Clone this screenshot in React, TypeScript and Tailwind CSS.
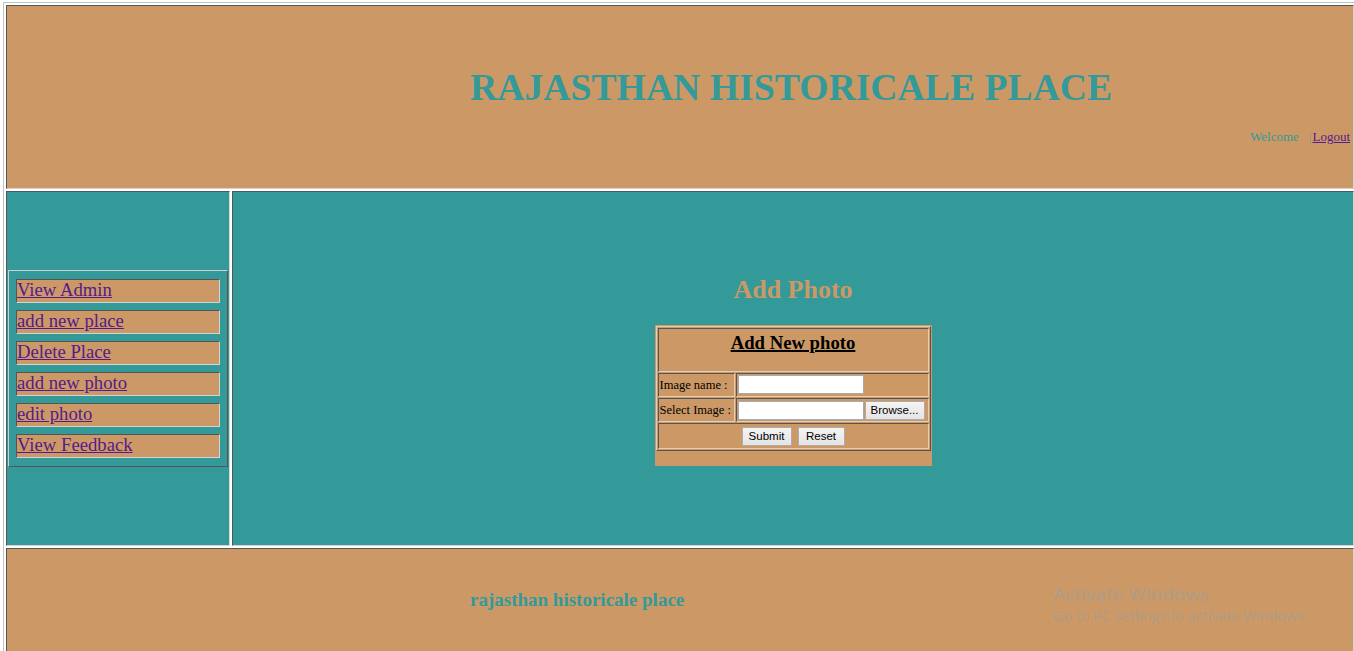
const inset = "border border-t-[#555555] border-l-[#555555] border-b-[#d4d4d4] border-r-[#d4d4d4]";
const formInset = "border border-t-[#555555] border-l-[#555555] border-b-[#e2cfba] border-r-[#e2cfba]";

const links = ["View Admin", "add new place", "Delete Place", "add new photo", "edit photo", "View Feedback"];

function Header() {
  return (
    <div className={`h-[184px] bg-[#cc9966] ${inset} flex flex-col`}>
      <h1 className="mt-[62px] pl-[463px] text-[37.7px] leading-[38px] font-bold text-[#339999] whitespace-nowrap">
        RAJASTHAN HISTORICALE PLACE
      </h1>
      <div className="mt-[24px] flex justify-end pr-[3px] text-[13px] leading-[13px]">
        <span className="text-[#339999] mr-[10px]">Welcome</span>
        <span className="text-[#8f8f8f] mr-[1px]">|</span>
        <a href="#" className="text-[#551a8b] underline">Logout</a>
      </div>
    </div>
  );
}

function SideMenu() {
  return (
    <div className={`w-[224px] bg-[#339999] ${inset} flex items-center px-[1px]`}>
      <div className="w-[220px] border border-t-[#cfcfcf] border-l-[#cfcfcf] border-b-[#555555] border-r-[#555555] px-[7px] py-[8px] flex flex-col gap-[7px]">
        {links.map((l) => (
          <div key={l} className={`h-[24px] bg-[#cc9966] ${inset}`}>
            <a href="#" className="block text-[18.7px] leading-[20px] text-[#551a8b] underline whitespace-nowrap">
              {l}
            </a>
          </div>
        ))}
      </div>
    </div>
  );
}

function Btn({ label, w }: { label: string; w: string }) {
  return (
    <button
      className={`${w} h-[19px] border border-[#acacac] bg-gradient-to-b from-[#f4f4f4] to-[#e4e4e4] font-['Liberation_Sans',sans-serif] text-[11.5px] leading-[17px] text-black`}
    >
      {label}
    </button>
  );
}

function PhotoForm() {
  return (
    <div className="w-[277px] bg-[#cc9966] pt-[1px] px-[1px] pb-[15px]">
      <div className="w-[275px] border border-t-[#e2cfba] border-l-[#e2cfba] border-b-[#555555] border-r-[#555555] p-[1px] flex flex-col gap-[1px]">
        <div className={`h-[44px] ${formInset} pt-[4px] text-center`}>
          <h3 className="text-[18.72px] leading-[19px] font-bold text-black underline decoration-2">Add New photo</h3>
        </div>
        <div className="flex gap-[1px] h-[24px]">
          <div className={`w-[77px] ${formInset} flex items-center pl-[1px] text-[12.5px] leading-[13px] whitespace-nowrap`}>
            Image name :
          </div>
          <div className={`flex-1 ${formInset} flex items-start pt-[1px] pl-[1px]`}>
            <input className="w-[126px] h-[19px] border border-[#a9a9a9] bg-white" />
          </div>
        </div>
        <div className="flex gap-[1px] h-[24px]">
          <div className={`w-[77px] ${formInset} flex items-center pl-[1px] text-[12.5px] leading-[13px] whitespace-nowrap`}>
            Select Image :
          </div>
          <div className={`flex-1 ${formInset} flex items-center gap-[1px] pl-[1px]`}>
            <input className="w-[126px] h-[19px] border border-[#a9a9a9] bg-white" />
            <Btn label="Browse..." w="w-[60px]" />
          </div>
        </div>
        <div className={`h-[26px] ${formInset} flex items-center justify-center gap-[6px]`}>
          <Btn label="Submit" w="w-[50px]" />
          <Btn label="Reset" w="w-[47px]" />
        </div>
      </div>
    </div>
  );
}

export default function App() {
  return (
    <div className="relative w-full h-[651px] overflow-hidden bg-white font-['Liberation_Serif',serif] text-black">
      <div className="ml-[3px] mt-[2px] w-[1354px] border border-t-[#c0c0c0] border-l-[#c0c0c0] border-b-[#555555] border-r-[#555555] p-[2px] flex flex-col gap-[2px]">
        <Header />
        <div className="flex gap-[2px] h-[355px]">
          <SideMenu />
          <div className={`flex-1 bg-[#339999] ${inset} flex flex-col items-center pt-[85px]`}>
            <h2 className="text-[26px] leading-[26px] font-bold text-[#cc9966]">Add Photo</h2>
            <div className="mt-[22px]">
              <PhotoForm />
            </div>
          </div>
        </div>
        <div className={`h-[200px] bg-[#cc9966] ${inset} pt-[41px] pl-[463px]`}>
          <h3 className="text-[19px] leading-[19px] font-bold text-[#339999]">rajasthan historicale place</h3>
        </div>
      </div>
      <div className="absolute left-[1053px] top-[583px] font-['Open_Sans',sans-serif] text-[#ad9c87] pointer-events-none">
        <div className="text-[19px] leading-[22px]">Activate Windows</div>
        <div className="text-[14.3px] leading-[22px]">Go to PC settings to activate Windows.</div>
      </div>
    </div>
  );
}
